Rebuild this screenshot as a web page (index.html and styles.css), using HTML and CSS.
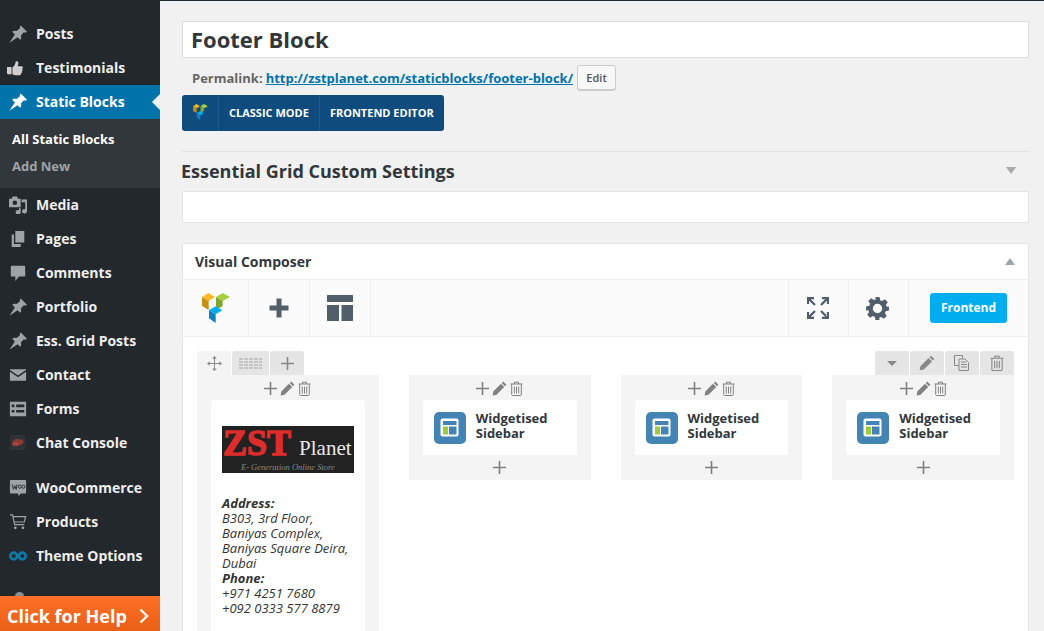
FILE: index.html
```html
<!DOCTYPE html>
<html lang="en">
<head>
<meta charset="utf-8">
<title>Edit Static Block</title>
<link rel="stylesheet" href="styles.css">
</head>
<body>
<svg class="sprite" width="0" height="0">
  <defs>
    <symbol id="i-pin" viewBox="0 0 20 20"><path d="M13 .5 20 7.500 18 8.500 16.500 8 13.200 11.800C14 14 13.500 15.500 12.500 16.500L9.500 13.500 .5 19.800 6.500 10.500 3.600 7.500C4.700 6.500 6.300 6 8.400 6.800L12.200 3.500 12 2Z"/></symbol>
    <symbol id="i-thumb" viewBox="0 0 20 20"><path d="M0 9h5v8H1.500A1.500 1.500 0 0 1 0 15.500ZM6 9.500c1.800-1.300 3.300-3.300 3.600-6.400.1-1.100 2.600-1.100 3 1 .3 1.600-.4 2.900-.9 3.900h4.300c2 0 2.100 2.400.8 3 .9.900.7 2.300-.3 2.800.4 1-.1 2.100-1 2.400.2 1-.5 1.800-1.500 1.800H9c-1.300 0-2-.8-3-1Z"/></symbol>
    <symbol id="i-media" viewBox="0 0 20 20"><path fill-rule="evenodd" d="M0 3h3l1-2.500h5L10 3h3v9.500H0ZM6.500 5a2.500 2.500 0 1 0 0 5 2.500 2.500 0 0 0 0-5Z"/><path d="M14 4h6v13a2.800 2.500 0 1 1-2-2.400V7h-4ZM13 13.500v4.500a2.800 2.500 0 1 1-2-2.400v-2.100Z"/></symbol>
    <symbol id="i-pages" viewBox="0 0 20 20"><path d="M7 1h10v13H7ZM3 5h2.500v10.500H13V19H3Z"/></symbol>
    <symbol id="i-comment" viewBox="0 0 20 20"><path d="M3 2h14a1 1 0 0 1 1 1v10a1 1 0 0 1-1 1h-6l-4 5v-5H3a1 1 0 0 1-1-1V3a1 1 0 0 1 1-1Z"/></symbol>
    <symbol id="i-mail" viewBox="0 0 20 20"><path d="M1 3.500h18v1L10 10.500 1 4.500ZM1 6.500l9 6 9-6V16.500H1Z"/></symbol>
    <symbol id="i-forms" viewBox="0 0 20 20"><path fill-rule="evenodd" d="M1 2h18v16H1ZM3 5v3h3V5Zm5 0v3h9V5ZM3 11v3h3v-3Zm5 0v3h9v-3Z"/></symbol>
    <symbol id="i-plus" viewBox="0 0 20 20"><path d="M7.500 .5h5v7h7v5h-7v7h-5v-7h-7v-5h7Z"/></symbol>
    <symbol id="i-plus-thin" viewBox="-1 -1 15 15"><path d="M5.700 0h1.600v5.700H13v1.600H7.300V13H5.700V7.300H0V5.700h5.700Z"/></symbol>
    <symbol id="i-pencil" viewBox="0 0 15 15"><path d="M11.200.6 14.400 3.800 13 5.200 9.800 2ZM9 2.800l3.200 3.200-7.700 7.700L.6 14.400l.7-3.900Z"/></symbol>
    <symbol id="i-trash" viewBox="0 0 14 15"><path fill="none" stroke="currentColor" stroke-width="1" d="M1 3h12M5 3V1.200h4V3M2.200 3.200v10.300c0 .5.300 1 .8 1h8c.5 0 .8-.5.800-1V3.200M4.800 5.500v7M7 5.500v7M9.200 5.500v7"/></symbol>
    <symbol id="i-vc" viewBox="60 150 96 102">
      <path fill="#fdb827" d="M66 168 85 156 105 168 86 180Z"/>
      <path fill="#c68f11" d="M66 168 86 180V207L66 195Z"/>
      <path fill="#a6cf3d" d="M108 168 128 156 150 168 128 180Z"/>
      <path fill="#82a532" d="M108 168 128 180V195L108 207Z"/>
      <path fill="#00aeef" d="M87 208 107 196 127 208 107 220Z"/>
      <path fill="#0f80bf" d="M87 208 107 220V246L87 232Z"/>
    </symbol>
    <symbol id="i-widget" viewBox="0 0 32 32">
      <rect width="32" height="32" rx="5" fill="#4384b5"/>
      <rect x="6.500" y="6.500" width="18" height="18" rx="2" fill="#fff"/>
      <rect x="9" y="9" width="13.500" height="4" fill="#4384b5"/>
      <rect x="9" y="14.500" width="5" height="8" fill="#9ccc3c"/>
      <rect x="15" y="14.500" width="7.500" height="8" fill="#4384b5"/>
    </symbol>
  </defs>
</svg>

<div class="shell">
  <nav class="sidebar">
    <ul class="menu">
      <li class="item"><svg class="mi"><use href="#i-pin"/></svg>Posts</li>
      <li class="item"><svg class="mi thumb"><use href="#i-thumb"/></svg>Testimonials</li>
      <li class="item current"><svg class="mi"><use href="#i-pin"/></svg>Static Blocks</li>
    </ul>
    <ul class="submenu">
      <li class="sub active">All Static Blocks</li>
      <li class="sub">Add New</li>
    </ul>
    <ul class="menu">
      <li class="item"><svg class="mi"><use href="#i-media"/></svg>Media</li>
      <li class="item"><svg class="mi"><use href="#i-pages"/></svg>Pages</li>
      <li class="item"><svg class="mi"><use href="#i-comment"/></svg>Comments</li>
      <li class="item"><svg class="mi"><use href="#i-pin"/></svg>Portfolio</li>
      <li class="item"><svg class="mi"><use href="#i-pin"/></svg>Ess. Grid Posts</li>
      <li class="item"><svg class="mi"><use href="#i-mail"/></svg>Contact</li>
      <li class="item"><svg class="mi"><use href="#i-forms"/></svg>Forms</li>
      <li class="item"><svg class="mi" viewBox="0 0 20 20"><rect x="1" y="1" width="17" height="17" rx="2" fill="#2f3338"/><ellipse cx="10" cy="9" rx="6" ry="3.500" fill="#8a3a34"/><ellipse cx="7.500" cy="11" rx="4" ry="2.200" fill="#a8443c"/></svg>Chat Console</li>
    </ul>
    <ul class="menu second">
      <li class="item"><svg class="mi" viewBox="0 0 20 20"><path d="M2 1h16a1 1 0 0 1 1 1v13a1 1 0 0 1-1 1h-5l-2 3-1-3H2a1 1 0 0 1-1-1V2a1 1 0 0 1 1-1Z"/><path d="M3.500 6 5 11.500 6.500 7.500 8 11.500 9 6" fill="none" stroke="#23282d" stroke-width="1"/><circle cx="12" cy="8.500" r="1.800" fill="none" stroke="#23282d"/><circle cx="16" cy="8.500" r="1.800" fill="none" stroke="#23282d"/></svg>WooCommerce</li>
      <li class="item"><svg class="mi" viewBox="0 0 20 20"><path d="M1 2h3l2.200 11H17M4.500 4H18.500L17 10H5.500" fill="none" stroke="currentColor" stroke-width="1.300"/><circle cx="7" cy="16.500" r="1.500"/><circle cx="15.500" cy="16.500" r="1.500"/></svg>Products</li>
      <li class="item"><svg class="mi" viewBox="0 0 20 20"><circle cx="5.200" cy="10" r="3.700" fill="none" stroke="#0e7ba6" stroke-width="3"/><circle cx="14.800" cy="10" r="3.700" fill="none" stroke="#0e7ba6" stroke-width="3"/></svg>Theme Options</li>
    </ul>
    <span class="peek"></span>
    <div class="help">Click for Help<svg class="chev" viewBox="0 0 10 16"><path d="M1.500 1.500 8 8 1.500 14.500" fill="none" stroke="#fff" stroke-width="2.400"/></svg></div>
  </nav>

  <main class="content">
    <div class="title-box">Footer Block</div>
    <div class="permalink">
      <strong class="perma-label">Permalink:</strong>
      <a class="perma-link">http://zstplanet.com/staticblocks/footer-block/</a>
      <span class="edit-btn">Edit</span>
    </div>
    <div class="mode-bar">
      <span class="mode-logo"><svg class="mode-logo-svg"><use href="#i-vc"/></svg></span>
      <span class="mode-btn">CLASSIC MODE</span>
      <span class="mode-btn">FRONTEND EDITOR</span>
    </div>

    <div class="grid-head">
      <h2 class="grid-title">Essential Grid Custom Settings</h2>
      <span class="caret down"></span>
    </div>
    <div class="grid-box"></div>

    <section class="vc">
      <header class="vc-head">
        <h3 class="vc-title">Visual Composer</h3>
        <span class="caret up"></span>
      </header>
      <div class="vc-toolbar">
        <span class="tool tool-logo"><svg class="vc-logo"><use href="#i-vc"/></svg></span>
        <span class="tool tool-s"><svg class="t-plus"><use href="#i-plus"/></svg></span>
        <span class="tool tool-s"><svg class="t-tpl" viewBox="0 0 26 26"><path d="M0 0h26v7H0ZM0 10h12v16H0ZM14.500 10H26v16H14.500Z"/></svg></span>
        <span class="tool-gap"></span>
        <span class="tool tool-s tool-l"><svg class="t-full" viewBox="0 0 22 22"><path d="M1 7V1H7M1 1 8 8M15 1H21V7M21 1 14 8M1 15V21H7M1 21 8 14M15 21H21V15M21 21 14 14" fill="none" stroke="#515f6a" stroke-width="2.300"/></svg></span>
        <span class="tool tool-s tool-l"><svg class="t-gear" viewBox="0 0 24 24"><path fill-rule="evenodd" d="M10 1h4l.6 3.100 1.900.8 2.600-1.800 2.800 2.800-1.800 2.600.8 1.900L23 10v4l-3.100.6-.8 1.900 1.800 2.600-2.800 2.800-2.600-1.800-1.900.8L14 23h-4l-.6-3.100-1.900-.8-2.600 1.800-2.800-2.800 1.800-2.600-.8-1.900L1 14v-4l3.100-.6.800-1.900-1.800-2.600 2.800-2.800 2.600 1.800 1.900-.8ZM12 7.500a4.500 4.500 0 1 0 0 9 4.500 4.500 0 0 0 0-9Z"/></svg></span>
        <span class="tool-front"><span class="front-btn">Frontend</span></span>
      </div>

      <div class="vc-body">
        <div class="row-tabs">
          <span class="tab tab-move"><svg class="tab-ico" viewBox="0 0 16 16"><path d="M8 0l2.500 2.800H8.500v4.700h4.700V5.500L16 8l-2.800 2.500v-2H8.500v4.700h2L8 16l-2.500-2.800h2V8.500H2.800v2L0 8l2.800-2.500v2h4.700V2.800h-2Z"/></svg></span>
          <span class="tab tab-grid"><span class="grid-ico"></span></span>
          <span class="tab tab-add"><svg class="tab-ico"><use href="#i-plus-thin"/></svg></span>
          <span class="tab-gap"></span>
          <span class="tab tab-r"><span class="tri"></span></span>
          <span class="tab tab-r"><svg class="tab-ico big"><use href="#i-pencil"/></svg></span>
          <span class="tab tab-r"><svg class="tab-ico big" viewBox="0 0 16 16"><path d="M.5.500h8v3M.5.500v10h4M5 4h6l3.500 3.500V15.500H5Z M7 7h5M7 9.500h6M7 12h6" fill="none" stroke="currentColor"/></svg></span>
          <span class="tab tab-r"><svg class="tab-ico big"><use href="#i-trash"/></svg></span>
        </div>

        <div class="cols">
          <div class="col">
            <div class="ctrls">
              <svg class="ci"><use href="#i-plus-thin"/></svg><svg class="ci"><use href="#i-pencil"/></svg><svg class="ci"><use href="#i-trash"/></svg>
            </div>
            <div class="card text-card">
              <div class="logo">
                <div class="logo-top"><span class="logo-zst">ZST</span><span class="logo-planet">Planet</span></div>
                <div class="logo-tag">E- Generation Online Store</div>
              </div>
              <p class="address"><b>Address:</b><br>B303, 3rd Floor,<br>Baniyas Complex,<br>Baniyas Square Deira,<br>Dubai<br><b>Phone:</b><br>+971 4251 7680<br>+092 0333 577 8879</p>
            </div>
          </div>

          <div class="col">
            <div class="ctrls">
              <svg class="ci"><use href="#i-plus-thin"/></svg><svg class="ci"><use href="#i-pencil"/></svg><svg class="ci"><use href="#i-trash"/></svg>
            </div>
            <div class="card widget"><svg class="w-ico"><use href="#i-widget"/></svg><span class="w-text">Widgetised Sidebar</span></div>
            <div class="col-add"><svg class="ci"><use href="#i-plus-thin"/></svg></div>
          </div>

          <div class="col">
            <div class="ctrls">
              <svg class="ci"><use href="#i-plus-thin"/></svg><svg class="ci"><use href="#i-pencil"/></svg><svg class="ci"><use href="#i-trash"/></svg>
            </div>
            <div class="card widget"><svg class="w-ico"><use href="#i-widget"/></svg><span class="w-text">Widgetised Sidebar</span></div>
            <div class="col-add"><svg class="ci"><use href="#i-plus-thin"/></svg></div>
          </div>

          <div class="col">
            <div class="ctrls">
              <svg class="ci"><use href="#i-plus-thin"/></svg><svg class="ci"><use href="#i-pencil"/></svg><svg class="ci"><use href="#i-trash"/></svg>
            </div>
            <div class="card widget"><svg class="w-ico"><use href="#i-widget"/></svg><span class="w-text">Widgetised Sidebar</span></div>
            <div class="col-add"><svg class="ci"><use href="#i-plus-thin"/></svg></div>
          </div>
        </div>
      </div>
    </section>
  </main>
</div>
</body>
</html>
```
FILE: styles.css
```css
* { box-sizing: border-box; }
html, body { margin: 0; padding: 0; height: 631px; overflow: hidden; }
body { background: #f1f1f1; font-family: "Open Sans", sans-serif; color: #32373c; font-size: 13px; }
.sprite { position: absolute; }
ul { list-style: none; margin: 0; padding: 0; }
h2, h3, p { margin: 0; }

.shell { display: flex; height: 631px; overflow: hidden; }

.sidebar { position: relative; flex: 0 0 160px; background: #23282d; padding-top: 17px; color: #eee; overflow: hidden; }
.item { position: relative; display: flex; align-items: center; height: 34px; padding: 0 0 2px 9px; font-size: 14px; font-weight: 700; color: #eee; }
.mi { flex: none; width: 18px; height: 18px; margin: 2px 9px 0 0; fill: #9ea3a8; color: #9ea3a8; }
.mi.thumb { fill: #cfcfcf; margin-left: -2px; margin-right: 11px; }
.current { background: #0073aa; color: #fff; }
.current .mi { fill: #fff; }
.current::after { content: ""; position: absolute; right: 0; top: 9px; border: 8px solid transparent; border-right-color: #f1f1f1; border-left-width: 0; }
.submenu { background: #32373c; padding: 7px 0 8px; height: 69px; }
.sub { height: 27px; line-height: 27px; padding-left: 12px; font-size: 13px; font-weight: 700; color: #9ea3a8; }
.sub.active { color: #fff; }
.second { margin-top: 11px; }
.peek { position: absolute; left: 15px; top: 592px; width: 9px; height: 9px; border-radius: 50%; background: #8b9095; }
.help { position: absolute; left: 0; right: 0; bottom: 0; height: 35px; display: flex; align-items: center; padding: 4px 0 0 7px; color: #fff; font-size: 18px; font-weight: 700; background: linear-gradient(#fd6f26, #ea5f16); }
.chev { width: 10px; height: 16px; margin-left: 12px; }

.content { flex: 1; min-width: 0; border-top: 1px solid #23282d; padding: 20px 15px 0 22px; }

.title-box { height: 37px; background: #fff; border: 1px solid #ddd; padding-left: 8px; font-size: 22px; font-weight: 700; line-height: 34px; color: #32373c; }
.permalink { display: flex; align-items: center; height: 25px; margin-top: 7px; padding-left: 10px; font-size: 13px; gap: 4px; color: #666; font-weight: 700; }
.perma-label { font-weight: 700; margin-right: -1px; }
.perma-link { color: #0073aa; text-decoration: underline; font-weight: 700; }
.edit-btn { height: 25px; width: 39px; border: 1px solid #ccc; border-radius: 3px; background: #f7f7f7; box-shadow: 0 1px 0 #ccc; font-size: 11px; font-weight: 600; text-align: center; line-height: 23px; color: #555; }
.mode-bar { display: inline-flex; align-items: stretch; height: 36px; margin-top: 5px; background: #0f4c7d; border-radius: 3px; vertical-align: top; }
.mode-logo { display: flex; align-items: center; justify-content: center; width: 36px; }
.mode-logo-svg { width: 17px; height: 18px; margin-top: -2px; }
.mode-btn { display: flex; align-items: center; padding: 0 10px 2px; border-left: 1px solid #1b5a8c; color: #fff; font-size: 11px; font-weight: 700; }

.grid-head { display: flex; align-items: center; justify-content: space-between; height: 40px; margin-top: 20px; border-top: 1px solid #e2e2e2; padding: 0 13px 2px 0; }
.grid-title { font-size: 18px; font-weight: 700; color: #32373c; margin-left: -1px; }
.caret { display: block; width: 0; height: 0; border: 5px solid transparent; }
.caret.down { border-top: 7px solid #aaa; border-bottom-width: 0; }
.caret.up { border-bottom: 7px solid #a0a5aa; border-top-width: 0; }
.grid-box { height: 32px; background: #fff; border: 1px solid #e5e5e5; }

.vc { margin-top: 20px; background: #fff; border: 1px solid #e5e5e5; height: 420px; }
.vc-head { display: flex; align-items: center; justify-content: space-between; height: 36px; padding: 0 13px 0 12px; border-bottom: 1px solid #eee; }
.vc-title { font-size: 14px; font-weight: 700; color: #32373c; }
.vc-toolbar { display: flex; height: 57px; background: #fbfbfb; border-bottom: 1px solid #eee; }
.tool { display: flex; align-items: center; justify-content: center; border-right: 1px solid #f0f0f0; }
.tool-logo { width: 66px; }
.tool-s { width: 61px; }
.tool-l { border-left: 1px solid #f0f0f0; margin-left: -1px; padding-right: 2px; }
.tool-gap { flex: 1; }
.vc-logo { width: 32px; height: 34px; }
.t-plus { width: 20px; height: 20px; fill: #515f6a; }
.t-tpl { width: 26px; height: 26px; fill: #515f6a; }
.t-full { width: 22px; height: 22px; }
.t-gear { width: 25px; height: 25px; fill: #515f6a; }
.tool-front { display: flex; align-items: center; padding: 0 21px; }
.front-btn { display: block; width: 77px; height: 30px; background: #00aef0; border-radius: 3px; color: #fff; font-size: 12px; font-weight: 700; text-align: center; line-height: 30px; }

.vc-body { padding: 14px 14px 0 14px; }
.row-tabs { display: flex; height: 24px; gap: 1px; }
.tab { display: flex; align-items: center; justify-content: center; width: 34px; background: #e5e5e5; border-radius: 3px 3px 0 0; color: #888; fill: #888; }
.tab-move { background: #f4f4f4; }
.tab-grid { width: 37px; }
.tab-gap { flex: 1; }
.tab-ico { width: 15px; height: 15px; fill: #888; }
.tab-ico.big { width: 16px; height: 16px; }
.grid-ico { display: block; width: 23px; height: 11px; background: repeating-linear-gradient(90deg, transparent 0 4px, #e5e5e5 4px 5px), repeating-linear-gradient(#c4c4c4 0 2px, transparent 2px 3px); }
.tri { display: block; width: 0; height: 0; border: 5px solid transparent; border-top: 5px solid #888; border-bottom-width: 0; }

.cols { display: grid; grid-template-columns: repeat(4, 1fr); gap: 30px; align-items: start; }
.col { background: #f4f4f4; padding: 0 14px; }
.ctrls { display: flex; justify-content: center; align-items: center; gap: 2px; height: 25px; padding-top: 1px; color: #808080; fill: #808080; }
.ci { width: 15px; height: 15px; fill: #808080; }
.card { background: #fff; border-radius: 2px; }
.text-card { padding: 26px 11px 40px; }
.logo { height: 47px; background: #222; }
.logo-top { display: flex; align-items: baseline; height: 35px; padding-left: 1px; font-family: "Liberation Serif", serif; }
.logo-zst { font-size: 36px; font-weight: 700; line-height: 35px; color: #dd2c2c; -webkit-text-stroke: 1.5px #dd2c2c; }
.logo-planet { font-size: 21px; color: #e8e8e8; margin-left: 8px; line-height: 35px; }
.logo-tag { font-family: "Liberation Serif", serif; font-style: italic; font-size: 8.500px; color: #888; text-align: center; line-height: 12px; }
.address { margin-top: 23px; font-size: 13px; line-height: 15px; font-style: italic; color: #333; }
.address b { font-weight: 700; }
.widget { display: flex; align-items: center; height: 55px; padding-left: 11px; }
.w-ico { flex: none; width: 32px; height: 32px; }
.w-text { margin-left: 10px; padding-bottom: 4px; font-size: 13px; line-height: 15px; font-weight: 700; color: #32373c; }
.col-add { display: flex; justify-content: center; align-items: center; height: 25px; }
```
